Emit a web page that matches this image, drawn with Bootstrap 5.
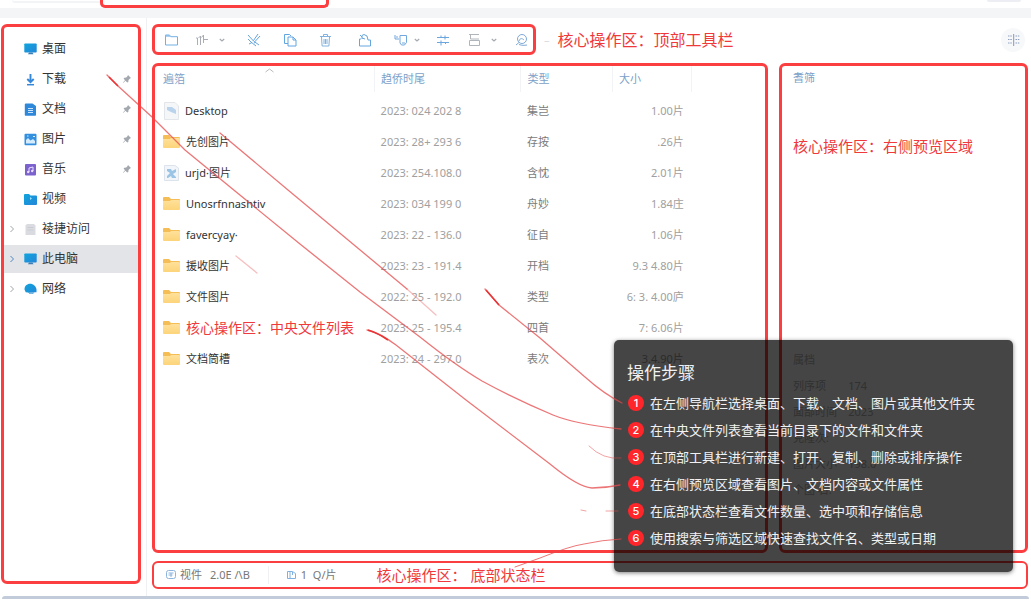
<!DOCTYPE html>
<html lang="zh-CN">
<head>
<meta charset="utf-8">
<meta name="viewport" content="width=device-width, initial-scale=1">
<title>文件管理器操作指南</title>
<link href="https://cdn.jsdelivr.net/npm/bootstrap@5.3.0/dist/css/bootstrap.min.css" rel="stylesheet">
<style>
:root { --mark: #fb3f41; --link: #7c9fc8; }
body { font-family: "Noto Sans", "Noto Sans CJK SC", sans-serif; font-size: 11px; line-height: 16px; color: #333; background: #fff; }
svg { display: block; flex: none; fill: none; }
.app { position: relative; min-height: 100vh; overflow: hidden; }
.topstrip { height: 8px; padding-left: 12px; padding-right: 10px; }
.search-end { width: 88px; height: 3px; border-bottom: 2px solid #f3f4f6; border-radius: 0 0 0 8px; }
.mark-top { width: 229px; border: 3px solid var(--mark); border-top: 0; border-radius: 0 0 5px 5px; }
.pill-end { width: 34px; height: 2px; background: #eceef3; border-radius: 0 0 8px 8px; }
.band { height: 10px; background: #f4f5f7; }
.marked { border: 3px solid var(--mark); border-radius: 6px; }
.side { width: 147px; padding: 6px 5px 12px 1px; border-right: 1px solid #eef0f4; }
.side .marked { padding-top: 7px; }
.side a { height: 30px; font-size: 12px; color: #333; text-decoration: none; padding: 0 6px 0 4px; }
.side a.current { background: #e3e4e8; height: 28px; margin: 1px 0; }
.twisty { width: 8px; margin-right: 8px; }
.side .name { margin-left: 5px; }
.content { padding: 6px 3px 7px 5px; }
.tools { width: 384px; height: 31px; padding: 0 7px 0 9px; }
.tools button, .round { border: 0; background: none; padding: 0; display: flex; align-items: center; gap: 10px; }
.tools .near { gap: 6px; }
.s-xs { margin-right: 8px; } .s-sm { margin-right: 10px; } .s-md { margin-right: 16px; } .s-lg { margin-right: 22px; }
.rule { width: 1px; height: 18px; background: #eef0f4; }
.note { color: #f0393b; white-space: nowrap; }
.note-lg { font-size: 16px; line-height: 20px; } .note-md { font-size: 15px; line-height: 20px; } .note-sm { font-size: 14px; }
.round { width: 24px; height: 24px; border-radius: 50%; background: #f7f8fa; justify-content: center; margin-right: 3px; }
.panels { gap: 11px; margin: 8px 0; }
.preview { width: 249px; padding: 4px 11px; }
.head-text { color: var(--link); }
.preview dl { color: #b4b4b4; margin-top: 196px; row-gap: 10px; }
.preview .note { margin-top: 50px; }
.files { table-layout: fixed; }
.files th, .files td { padding: 0 0 0 6px; height: 31px; vertical-align: middle; white-space: nowrap; }
.files th { height: 26px; font-weight: 400; color: var(--link); border-right: 1px solid #f2f3f6; }
.files th:last-child { border: 0; }
.files th:first-child, .files td:first-child { padding-left: 8px; }
.files td { color: #a0a0a0; }
.files td:first-child { color: #333; }
.files td:nth-child(3) { color: #7b7b7b; }
.files td:nth-child(4) { text-align: right; padding-right: 8px; }
.files .entry { display: flex; align-items: center; gap: 5px; }
.spacer-row { height: 3px; }
.caret-up { top: 0; left: 50%; }
.status { height: 28px; border-width: 2px; padding: 0 12px; color: #777; }
.status .rule { margin: 0 18px; }
.status .note { margin-left: 40px; }
.bottom-line { height: 3px; background: #c2cbd9; border-radius: 4px 4px 0 0; margin: 0 2px 2px; }
.steps { right: 18px; bottom: 29px; width: 399px; height: 232px; background: rgba(0,0,0,.73); border-radius: 5px; box-shadow: 0 1px 4px rgba(0,0,0,.5); padding: 21px 13px; color: #f1f1f1; }
.steps h1 { font-size: 17px; line-height: 24px; font-weight: 400; margin: 0 0 4px; }
.steps li { height: 27px; font-size: 13px; gap: 6px; padding-left: 1px; }
.num { width: 16px; height: 16px; border-radius: 50%; background: #ff262b; color: #fff; font: 500 11px/16px Inter, sans-serif; text-align: center; }
.links { inset: 0; width: 100%; height: 100%; pointer-events: none; }
</style>
<script src="https://cdn.jsdelivr.net/npm/bootstrap@5.3.0/dist/js/bootstrap.bundle.min.js"></script>
</head>
<body>
<svg width="0" height="0" class="position-absolute" aria-hidden="true">
  <defs>
    <linearGradient id="blue" x1="0" y1="0" x2="1" y2="1"><stop stop-color="#0fa5dd"/><stop offset="1" stop-color="#2585d8"/></linearGradient>
    <linearGradient id="gold" x1="0" y1="0" x2="0" y2="1"><stop stop-color="#ffe19a"/><stop offset="1" stop-color="#fcd47a"/></linearGradient>
    <symbol id="folder" viewBox="0 0 18 15"><path d="M0 2a1 1 0 0 1 1-1h5l2 2h8a1 1 0 0 1 1 1v4H0z" fill="#f5bd55"/><path d="M0 5h7l1-1h8a1 1 0 0 1 1 1v8a1 1 0 0 1-1 1H1a1 1 0 0 1-1-1z" fill="url(#gold)"/></symbol>
    <symbol id="pin" viewBox="0 0 10 10"><path d="M6 1l3 3-1 .6-1.500 1.500-.2 1.900-1 .6-1.900-1.900L1.500 8.800 1 8.500l2-2.200L1.600 4.600l.8-.8 1.900-.2L5.600 2z" fill="#a3a8af"/></symbol>
    <symbol id="right" viewBox="0 0 8 8"><path d="M2.500 1l3 3-3 3" stroke="currentColor"/></symbol>
    <symbol id="down" viewBox="0 0 6 6"><path d="M.8 2l2.200 2L5.200 2" stroke="#a5aab2" stroke-width="1.200"/></symbol>
    <symbol id="screen" viewBox="0 0 13 12"><rect x=".3" y=".5" width="12.400" height="9" rx=".8" fill="url(#blue)"/><path d="M5 9.500h3.500l1 1.800H4z" fill="#3b7fb6"/></symbol>
  </defs>
</svg>
<div class="app d-flex flex-column">
  <div class="topstrip d-flex">
    <div class="search-end"></div><div class="mark-top"></div><div class="pill-end ms-auto"></div>
  </div>
  <div class="band"></div>
  <div class="d-flex flex-grow-1">
    <aside class="side d-flex flex-shrink-0">
      <nav class="marked flex-grow-1" aria-label="导航">
        <a href="#" class="d-flex align-items-center"><span class="twisty"></span><svg width="13" height="12"><use href="#screen"/></svg><span class="name">桌面</span></a>
        <a href="#" class="d-flex align-items-center"><span class="twisty"></span><svg width="13" height="13"><path d="M6.500 1v8M3.300 6l3.200 3.200L9.700 6" stroke="#3487d9" stroke-width="1.900"/><path d="M3 11.700h7" stroke="#3487d9" stroke-width="1.500"/></svg><span class="name">下载</span><svg class="ms-auto" width="10" height="10"><use href="#pin"/></svg></a>
        <a href="#" class="d-flex align-items-center"><span class="twisty"></span><svg width="13" height="13"><path d="M1.500.5h7L12 3v9a.7.7 0 0 1-.7.700H1.500A.7.700 0 0 1 .8 12V1.200z" fill="#2e88da"/><path d="M4 5.500h5M4 7.500h5M4 9.500h5" stroke="#c8e3fb"/></svg><span class="name">文档</span><svg class="ms-auto" width="10" height="10"><use href="#pin"/></svg></a>
        <a href="#" class="d-flex align-items-center"><span class="twisty"></span><svg width="13" height="13"><rect x=".5" y=".8" width="12" height="11.500" rx="1" fill="#3290df"/><path d="M2 10.500V7l2-2 2.500 2.500L9 6l2 2v2.500z" fill="#d6ecfd"/><path d="M3 3h1.500M9 3.500h2" stroke="#d6ecfd"/></svg><span class="name">图片</span><svg class="ms-auto" width="10" height="10"><use href="#pin"/></svg></a>
        <a href="#" class="d-flex align-items-center"><span class="twisty"></span><svg width="13" height="13"><rect x="1" y="1" width="11" height="11.500" rx="1" fill="#7b62cd"/><path d="M5 9V5l4-1v4" stroke="#eadfff"/><circle cx="4.200" cy="9" r="1.200" fill="#eadfff"/><circle cx="8.200" cy="8" r="1.200" fill="#eadfff"/></svg><span class="name">音乐</span><svg class="ms-auto" width="10" height="10"><use href="#pin"/></svg></a>
        <a href="#" class="d-flex align-items-center"><span class="twisty"></span><svg width="13" height="13"><path d="M0 2a1 1 0 0 1 1-1h4l1.500 1.500H12a1 1 0 0 1 1 1V11a1 1 0 0 1-1 1H1a1 1 0 0 1-1-1z" fill="url(#blue)"/><path d="M6 4l2 1.500L6 7z" fill="#9fe0fa"/></svg><span class="name">视频</span></a>
        <a href="#" class="d-flex align-items-center"><svg class="twisty" width="8" height="8" color="#a0a4aa"><use href="#right"/></svg><svg width="13" height="13"><path d="M3 1h7l1.500 1.500V12h-10V2.500z" fill="#d9dbe0"/><path d="M3.500 4.500h6M3.500 7h6" stroke="#c9cdd3"/></svg><span class="name">祾捷访问</span></a>
        <a href="#" class="current d-flex align-items-center"><svg class="twisty" width="8" height="8" color="#4f86c6"><use href="#right"/></svg><svg width="13" height="12"><use href="#screen"/></svg><span class="name">此电脑</span></a>
        <a href="#" class="d-flex align-items-center"><svg class="twisty" width="8" height="8" color="#a0a4aa"><use href="#right"/></svg><svg width="13" height="12"><path d="M.5 6.500C.5 3 3 .8 6 .8c3.500 0 6 2.500 6.500 5.700v2.700h-2.200C9.300 11 7.500 11.300 6 11l-2-1.500-2.300-.3z" fill="url(#blue)"/><path d="M4 9.500L6 11c2 .2 3.500-.5 4.300-2z" fill="#7fb9e0"/></svg><span class="name">网络</span></a>
      </nav>
    </aside>
    <main class="content d-flex flex-column flex-grow-1">
      <div class="d-flex align-items-center">
        <div class="marked tools d-flex align-items-center" role="toolbar" aria-label="工具栏">
          <button class="s-md" aria-label="新建"><svg width="15" height="14"><path d="M1.500 12V2h4l1.200 1.700h6.800V12z" stroke="#73afe2" /><path d="M1.500 2h4l1.200 1.700H1.500z" fill="#8fc1ec"/></svg></button>
          <button class="s-lg" aria-label="排序"><svg width="14" height="14"><path d="M1 5h1.500V12M5.500 3v9M5.500 3L3.500 5M8.500 2v8M8.500 2L6.500 4.500M8.500 6.500H13" stroke="#a9aeb6"/></svg><svg width="6" height="6"><use href="#down"/></svg></button>
          <button class="s-lg" aria-label="剪切"><svg width="14" height="14"><path d="M1 2l5.500 6L12 12M1 6l3 3 5 4M11 1L6.500 7.500M13 3L8 8.500M2 11l3-1.500M7 10l2-1" stroke="#64a5df"/></svg></button>
          <button class="s-lg" aria-label="复制"><svg width="14" height="14"><path d="M5 10.500H1.500V1.500h5L8 3M5 4h5l3 3v6H5zM10 4v3h3" stroke="#62a6e2"/></svg></button>
          <button class="s-md" aria-label="删除"><svg width="13" height="14"><path d="M1 3.500h11M4.500 3V1.500h4V3M2.500 4l.6 9h6.800l.6-9M5 6v5M6.500 6v5M8 6v5" stroke="#82b2dd"/></svg></button>
          <span class="rule s-sm"></span>
          <button class="s-lg" aria-label="共享"><svg width="14" height="14"><path d="M3 6H1.500v7h11V7H10M4 6V2.500L6 1.500l3 1.500 1 4M4 5l3 1M2 2l2 2" stroke="#66a6dd"/></svg></button>
          <button class="near s-md" aria-label="标记"><svg width="14" height="14"><path d="M6 2.500h6.500v7l-2 2.500H7.500L6 10zM1 2v4h4M3 3v2M8 10h3" stroke="#70a7de"/></svg><svg width="6" height="6"><use href="#down"/></svg></button>
          <button class="s-sm" aria-label="筛选"><svg width="14" height="14"><path d="M1 4.500h12M1 9.500h12M5 2.500v2M9 2.500v4M5 7.500v5M9.500 9v2" stroke="#6ba6de"/></svg></button>
          <span class="rule s-xs"></span>
          <button class="s-sm" aria-label="视图"><svg width="13" height="14"><path d="M1 1.500h10M2.500 2v4H11M1.500 7.500h10v5h-10z" stroke="#b0b5bc"/></svg><svg width="6" height="6"><use href="#down"/></svg></button>
          <span class="rule s-xs"></span>
          <button aria-label="搜索"><svg width="13" height="14"><circle cx="7" cy="6" r="4.500" stroke="#7da9d6"/><path d="M4 8c1-3 3-3 5-1M1 12l3-2.500M4 11.500c3 1 5 1 8 .5" stroke="#7da9d6"/></svg></button>
        </div>
        <span class="text-secondary opacity-25 ms-2 me-2">–</span>
        <span class="note note-lg">核心操作区：顶部工具栏</span>
        <button class="round ms-auto" aria-label="网格视图"><svg width="13" height="12"><path d="M1 2h4M1 5.500h4M1 9h4M8.500 2h4M8.500 5.500h4M8.500 9h4" stroke="#8fa0bd" stroke-dasharray="1.500 .8"/><path d="M6.700 0v12" stroke="#8197bd"/></svg></button>
      </div>
      <div class="panels d-flex flex-grow-1">
        <section class="marked flex-grow-1 position-relative">
          <table class="files w-100">
            <colgroup><col style="width:36%"><col style="width:24%"><col style="width:15%"><col style="width:13%"><col style="width:12%"></colgroup>
            <thead>
              <tr><th class="position-relative">遍箔<svg class="caret-up position-absolute" width="9" height="8"><path d="M.5 6l4-3 4 3" stroke="#bbb"/></svg></th><th>趋侨时尾</th><th>类型</th><th>大小</th><th></th></tr>
            </thead>
            <tbody>
              <tr class="spacer-row" aria-hidden="true"></tr>
              <tr><td><div class="entry"><svg width="17" height="18"><path d="M1.500.5H12L15.500 4v13.500h-14z" fill="#f5f6f8" stroke="#e2e5ea"/><path d="M4 5h5l4 3v4L8 10 4 8z" fill="#b9d3ec"/></svg>Desktop</div></td><td>2023: 024 202 8</td><td>集岂</td><td>1.00片</td><td></td></tr>
              <tr><td><div class="entry"><svg width="18" height="15"><use href="#folder"/></svg>先创图片</div></td><td>2023: 28+ 293 6</td><td>存按</td><td>.26片</td><td></td></tr>
              <tr><td><div class="entry"><svg width="17" height="16"><path d="M1.500.5H12L15.500 3v12.500h-14z" fill="#f2f6fa" stroke="#dce3ea"/><path d="M4 4h4l1 2 4-2v3l-3 2 3 3v1H9L8 11l-3 2H4v-2l3-3-3-2z" fill="#9cc4e4"/></svg>urjd·图片</div></td><td>2023: 254.108.0</td><td>含忱</td><td>2.01片</td><td></td></tr>
              <tr><td><div class="entry"><svg width="18" height="15"><use href="#folder"/></svg>Unosrfnnashtiv</div></td><td>2023: 034 199 0</td><td>舟妙</td><td>1.84庄</td><td></td></tr>
              <tr><td><div class="entry"><svg width="18" height="15"><use href="#folder"/></svg>favercyay·</div></td><td>2023: 22 - 136.0</td><td>征自</td><td>1.06片</td><td></td></tr>
              <tr><td><div class="entry"><svg width="18" height="15"><use href="#folder"/></svg>援收图片</div></td><td>2023: 23 - 191.4</td><td>开档</td><td>9.3 4.80片</td><td></td></tr>
              <tr><td><div class="entry"><svg width="18" height="15"><use href="#folder"/></svg>文件图片</div></td><td>2022: 25 - 192.0</td><td>类型</td><td>6: 3. 4.00庐</td><td></td></tr>
              <tr><td><div class="entry"><svg width="18" height="15"><use href="#folder"/></svg><span class="note note-sm">核心操作区：中央文件列表</span></div></td><td>2023: 25 - 195.4</td><td>四首</td><td>7: 6.06片</td><td></td></tr>
              <tr><td><div class="entry"><svg width="18" height="15"><use href="#folder"/></svg>文档筒槽</div></td><td>2023: 24 - 297.0</td><td>表次</td><td>3.4.90片</td><td></td></tr>
            </tbody>
          </table>
        </section>
        <section class="marked preview flex-shrink-0">
          <div class="head-text">耆筛</div>
          <div class="note note-md">核心操作区：右侧预览区域</div>
          <dl class="row gx-0">
            <dt class="col-12 fw-normal">属档</dt>
            <dt class="col-3 fw-normal">列序项</dt><dd class="col-9 mb-0">174</dd>
            <dt class="col-3 fw-normal">面部时间</dt><dd class="col-9 mb-0">2023</dd>
            <dt class="col-12 fw-normal">克隆次:</dt>
            <dt class="col-3 fw-normal">图片大小</dt><dd class="col-9 mb-0">198.0</dd>
            <dt class="col-12 fw-normal">个图 右:</dt>
          </dl>
        </section>
      </div>
      <footer class="marked status d-flex align-items-center">
        <svg width="10" height="10"><rect x=".5" y=".5" width="9" height="8" rx="2" stroke="#8db4dc"/><path d="M2.500 3h5M2.500 5h4M5 3v4" stroke="#8db4dc"/></svg>
        <span class="ms-1">视件</span><span class="ms-2">2.0E /\B</span>
        <span class="rule"></span>
        <svg width="10" height="10"><path d="M.5 1.500h5l3 2v5h-8zM3 1.500v7M5.500 2v3" stroke="#7fb0e0"/></svg>
        <span class="ms-1">1&nbsp; Q/片</span>
        <span class="note note-md">核心操作区： 底部状态栏</span>
      </footer>
    </main>
  </div>
  <div class="bottom-line"></div>
  <section class="steps position-absolute">
    <h1>操作步骤</h1>
    <ol class="list-unstyled mb-0">
      <li class="d-flex align-items-center"><span class="num">1</span>在左侧导航栏选择桌面、下载、文档、图片或其他文件夹</li>
      <li class="d-flex align-items-center"><span class="num">2</span>在中央文件列表查看当前目录下的文件和文件夹</li>
      <li class="d-flex align-items-center"><span class="num">3</span>在顶部工具栏进行新建、打开、复制、删除或排序操作</li>
      <li class="d-flex align-items-center"><span class="num">4</span>在右侧预览区域查看图片、文档内容或文件属性</li>
      <li class="d-flex align-items-center"><span class="num">5</span>在底部状态栏查看文件数量、选中项和存储信息</li>
      <li class="d-flex align-items-center"><span class="num">6</span>使用搜索与筛选区域快速查找文件名、类型或日期</li>
    </ol>
  </section>
  <svg class="links position-absolute" viewBox="0 0 1031 601" preserveAspectRatio="none" aria-hidden="true">
    <g stroke="#e5484a" stroke-opacity=".75" stroke-width="1.300" stroke-linecap="round">
      <path d="M107 75L118 86L152 117L185 150L235 191L300 244L360 292L420 337Q455 365 482 381Q515 399 553 415Q575 424 621 429"/>
      <path d="M220 133L288 190L407 289"/>
      <path d="M407 289L436 315M236 256L257 273" stroke-opacity=".35"/>
      <path d="M485 289L499 305L540 338L585 377Q604 394 622 403"/>
      <path d="M367 330Q380 333 396 345L466 400L550 464Q578 487 592 488Q606 488 620 485"/>
      <path d="M589 446Q603 460 621 458M581 510L586 511M606 511L618 511" stroke-opacity=".5" stroke-width="1"/>
      <path d="M515 567L540 558Q570 546 584 544Q602 540 621 539" stroke-width="1"/>
    </g>
    <path d="M109 77L118 86M486 290L499 305M368 330Q378 333 388 340" stroke="#ea3436" stroke-width="1.600"/>
  </svg>
</div>
</body>
</html>
